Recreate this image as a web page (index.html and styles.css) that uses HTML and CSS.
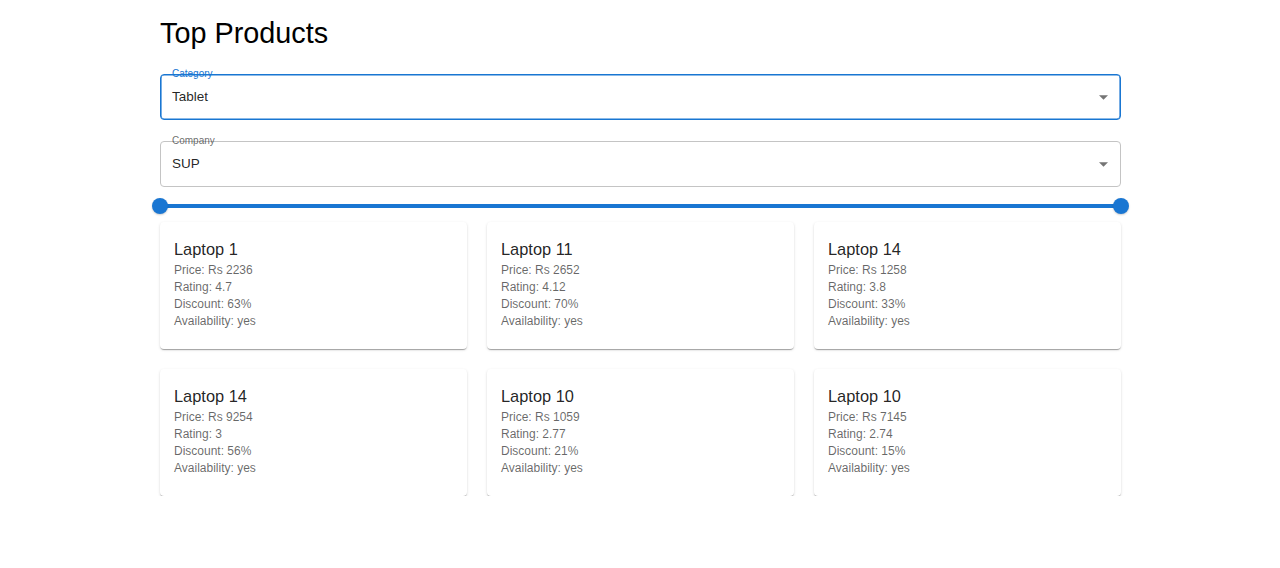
FILE: index.html
```html
<!DOCTYPE html>
<html lang="en">
<head>
<meta charset="utf-8">
<title>Top Products</title>
<link rel="stylesheet" href="styles.css">
</head>
<body>
<main class="page">
  <h1 class="title">Top Products</h1>

  <div class="select focused">
    <span class="select-label">Category</span>
    <span class="select-value">Tablet</span>
    <svg class="select-arrow" width="9" height="5" viewBox="0 0 10 5"><path d="M0 0l5 5 5-5z" fill="#757575"/></svg>
  </div>

  <div class="select">
    <span class="select-label">Company</span>
    <span class="select-value">SUP</span>
    <svg class="select-arrow" width="9" height="5" viewBox="0 0 10 5"><path d="M0 0l5 5 5-5z" fill="#757575"/></svg>
  </div>

  <div class="slider">
    <div class="slider-track">
      <span class="thumb thumb-left"></span>
      <span class="thumb thumb-right"></span>
    </div>
  </div>

  <div class="grid">
    <div class="card">
      <div class="card-title">Laptop 1</div>
      <div class="card-line">Price: Rs 2236</div>
      <div class="card-line">Rating: 4.7</div>
      <div class="card-line">Discount: 63%</div>
      <div class="card-line">Availability: yes</div>
    </div>
    <div class="card">
      <div class="card-title">Laptop 11</div>
      <div class="card-line">Price: Rs 2652</div>
      <div class="card-line">Rating: 4.12</div>
      <div class="card-line">Discount: 70%</div>
      <div class="card-line">Availability: yes</div>
    </div>
    <div class="card">
      <div class="card-title">Laptop 14</div>
      <div class="card-line">Price: Rs 1258</div>
      <div class="card-line">Rating: 3.8</div>
      <div class="card-line">Discount: 33%</div>
      <div class="card-line">Availability: yes</div>
    </div>
    <div class="card">
      <div class="card-title">Laptop 14</div>
      <div class="card-line">Price: Rs 9254</div>
      <div class="card-line">Rating: 3</div>
      <div class="card-line">Discount: 56%</div>
      <div class="card-line">Availability: yes</div>
    </div>
    <div class="card">
      <div class="card-title">Laptop 10</div>
      <div class="card-line">Price: Rs 1059</div>
      <div class="card-line">Rating: 2.77</div>
      <div class="card-line">Discount: 21%</div>
      <div class="card-line">Availability: yes</div>
    </div>
    <div class="card">
      <div class="card-title">Laptop 10</div>
      <div class="card-line">Price: Rs 7145</div>
      <div class="card-line">Rating: 2.74</div>
      <div class="card-line">Discount: 15%</div>
      <div class="card-line">Availability: yes</div>
    </div>
  </div>
</main>
</body>
</html>
```

FILE: styles.css
```css
* { box-sizing: border-box; }

html, body {
  margin: 0;
  padding: 0;
  background: #ffffff;
  font-family: "Liberation Sans", Arial, sans-serif;
  color: rgba(0, 0, 0, 0.87);
}

.page {
  width: 961px;
  margin-left: 160px;
  padding-top: 17px;
}

.title {
  margin: 0;
  font-size: 28.8px;
  font-weight: 400;
  line-height: 32px;
  color: #000;
}

.select {
  position: relative;
  height: 46px;
  margin-top: 25px;
  border: 1px solid #c4c4c4;
  border-radius: 4px;
  display: flex;
  align-items: center;
  padding-left: 11px;
}

.select + .select {
  margin-top: 21px;
}

.select.focused {
  border-color: #1976d2;
  box-shadow: inset 0 0 0 0.6px #1976d2;
}

.select-label {
  position: absolute;
  left: 11px;
  top: -7px;
  font-size: 10px;
  line-height: 12px;
  color: rgba(0, 0, 0, 0.6);
}

.select.focused .select-label {
  color: #1976d2;
}

.select-value {
  font-size: 13.5px;
  line-height: 16px;
  color: rgba(0, 0, 0, 0.87);
}

.select-arrow {
  position: absolute;
  right: 12px;
  top: 20px;
}

.slider {
  height: 35px;
  padding-top: 17px;
}

.slider-track {
  position: relative;
  height: 4px;
  background: #1976d2;
  border-radius: 2px;
}

.thumb {
  position: absolute;
  top: -6px;
  width: 16px;
  height: 16px;
  border-radius: 50%;
  background: #1976d2;
  box-shadow: 0 1px 2px rgba(0, 0, 0, 0.2);
}

.thumb-left { left: -8px; }
.thumb-right { right: -8px; }

.grid {
  display: grid;
  grid-template-columns: repeat(3, 307px);
  column-gap: 20px;
  row-gap: 20px;
}

.card {
  background: #fff;
  border-radius: 4px;
  padding: 15px 14px 19px;
  box-shadow: 0 2px 1px -1px rgba(0, 0, 0, 0.2), 0 1px 1px 0 rgba(0, 0, 0, 0.14), 0 1px 3px 0 rgba(0, 0, 0, 0.12);
}

.card-title {
  font-size: 16.4px;
  line-height: 25px;
  color: rgba(0, 0, 0, 0.87);
}

.card-line {
  font-size: 12px;
  line-height: 17px;
  color: rgba(0, 0, 0, 0.6);
}
```
